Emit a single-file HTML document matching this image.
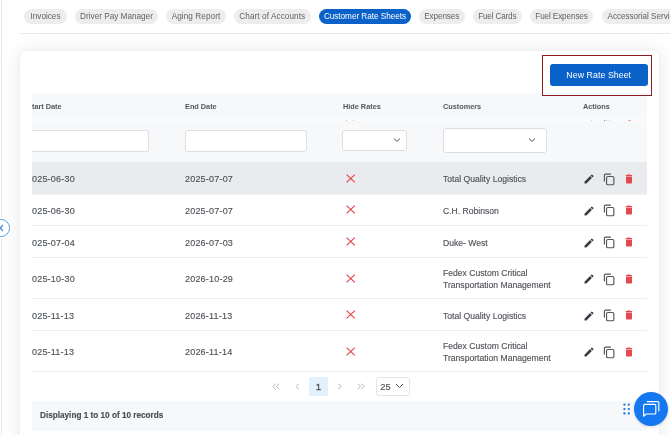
<!DOCTYPE html>
<html><head><meta charset="utf-8">
<style>
*{box-sizing:border-box;margin:0;padding:0}
html,body{width:670px;height:435px;overflow:hidden;background:#fff;font-family:"Liberation Sans",sans-serif;}
.a{position:absolute}
#root{will-change:transform;position:relative;width:670px;height:435px;overflow:hidden;background:#fff}
.pill{position:absolute;top:8.5px;height:15px;border-radius:8px;background:#ededed;color:#626262;font-size:8.2px;line-height:15px;text-align:center;white-space:nowrap}
.pill.act{background:#0a62c9;color:#fff}
.card{position:absolute;left:19.5px;top:51px;width:639.5px;height:420px;background:#fff;border-radius:6px;box-shadow:0 0 4px rgba(0,0,0,0.04),0 0 18px 3px rgba(0,0,0,0.065)}
.th{position:absolute;top:101.3px;font-size:7.35px;letter-spacing:-0.02px;font-weight:bold;color:#53585e;line-height:12px;white-space:nowrap}
.inp{position:absolute;background:#fff;border:1px solid #dcdee1;border-radius:3px}
.row{position:absolute;left:32px;width:615px;border-bottom:1px solid #eceef0}
.td{-webkit-text-stroke:0.15px currentColor;position:absolute;font-size:8.6px;color:#50555a;line-height:12px;white-space:nowrap}
.dt{letter-spacing:0.2px;font-size:9px}
.ic{position:absolute}
</style></head><body>
<div id="root">
  <!-- sidebar border -->
  <div class="a" style="left:1px;top:0;width:1px;height:435px;background:#e6e6e6"></div>

  <!-- tabs -->
  <div class="pill" style="left:24px;width:43px;letter-spacing:0px">Invoices</div>
  <div class="pill" style="left:75px;width:83px;letter-spacing:0px">Driver Pay Manager</div>
  <div class="pill" style="left:166px;width:60px;letter-spacing:0.08px">Aging Report</div>
  <div class="pill" style="left:234px;width:76.5px;letter-spacing:0.08px">Chart of Accounts</div>
  <div class="pill act" style="left:319px;width:92px;letter-spacing:-0.03px">Customer Rate Sheets</div>
  <div class="pill" style="left:418.5px;width:46.5px;letter-spacing:-0.1px">Expenses</div>
  <div class="pill" style="left:472.5px;width:49.5px;letter-spacing:-0.18px">Fuel Cards</div>
  <div class="pill" style="left:530px;width:63px;letter-spacing:-0.13px">Fuel Expenses</div>
  <div class="pill" style="left:601.5px;width:90px;text-align:left;padding-left:6px;letter-spacing:-0.05px">Accessorial Services</div>
  <!-- separator -->
  <div class="a" style="left:20px;top:33px;width:650px;height:1px;background:#e8e8e8"></div>

  <!-- card -->
  <div class="card"></div>


  <!-- header bg -->
  <div class="a" style="left:32px;top:93px;width:615px;height:69px;background:#f7f8f9"></div>
  <div class="a" style="left:32px;top:119px;width:615px;height:1.5px;background:#fcfcfd"></div>
  <div class="th" style="left:32px">tart Date</div>
  <div class="th" style="left:185px">End Date</div>
  <div class="th" style="left:343px">Hide Rates</div>
  <div class="th" style="left:443px">Customers</div>
  <div class="th" style="left:583px">Actions</div>

  <!-- ghost strip -->
  <div class="a" style="left:346px;top:120px;width:1px;height:1px;background:#f2a9ab"></div>
  <div class="a" style="left:353px;top:120px;width:1px;height:1px;background:#f2a9ab"></div>
  <div class="a" style="left:591px;top:120px;width:1px;height:1px;background:#d2d4d6"></div>
  <div class="a" style="left:604px;top:120px;width:1px;height:1px;background:#8a8e92"></div>
  <div class="a" style="left:605px;top:120px;width:6px;height:1px;background:#e6e7e9"></div>
  <div class="a" style="left:628px;top:120px;width:3px;height:1px;background:#f4a4a7"></div>
  <!-- highlight box + button -->
  <div class="a" style="left:542px;top:55px;width:110px;height:41px;border:1.7px solid #8c1e22"></div>
  <div class="a" style="left:550px;top:63.5px;width:97.5px;height:22px;background:#0a62c9;border-radius:3px;color:#fff;font-size:8.8px;letter-spacing:0.05px;line-height:22px;padding-top:0.6px;text-align:center">New Rate Sheet</div>

  <!-- filters -->
  <div class="inp" style="left:32px;top:129.5px;width:117px;height:22px;border-left:none;border-radius:0 3px 3px 0"></div>
  <div class="inp" style="left:185px;top:129.5px;width:122px;height:22px"></div>
  <div class="inp" style="left:342px;top:130px;width:65px;height:21px"></div>
  <div class="inp" style="left:443px;top:128px;width:104px;height:25px"></div>
  <svg class="ic" style="left:393px;top:137px" width="8" height="6" viewBox="0 0 8 6"><path d="M1 1.6 L4 4.4 L7 1.6" fill="none" stroke="#50555a" stroke-width="1"/></svg>
  <svg class="ic" style="left:528px;top:137px" width="8" height="6" viewBox="0 0 8 6"><path d="M1 1.6 L4 4.4 L7 1.6" fill="none" stroke="#50555a" stroke-width="1"/></svg>

  <!-- rows -->
  <div id="rows">
<div class="a" style="left:32px;top:194px;width:615px;height:1px;background:#f2f3f5"></div>
<div class="row" style="top:162px;height:32px;background:#e9ebee;border-bottom:none;"></div>
<div class="td dt" style="left:32px;top:173.2px">025-06-30</div>
<div class="td dt" style="left:185px;top:173.2px">2025-07-07</div>
<svg class="ic" style="left:345.5px;top:173.5px" width="9.5" height="9" viewBox="0 0 9.5 9"><path d="M0.6 0.6 L8.9 8.4 M8.9 0.6 L0.6 8.4" stroke="#e5484d" stroke-width="1.25" fill="none"/></svg>
<div class="td" style="left:443px;top:173.2px">Total Quality Logistics</div>
<svg class="ic" style="left:582.8px;top:173.1px" width="12" height="12" viewBox="0 0 24 24"><path fill="#363c43" d="M3 17.25V21h3.75L17.81 9.94l-3.75-3.75L3 17.25zM20.71 7.04a.996.996 0 0 0 0-1.41l-2.34-2.34a.996.996 0 0 0-1.41 0l-1.83 1.83 3.75 3.75 1.83-1.83z"/></svg>
<svg class="ic" style="left:603px;top:172.5px" width="13" height="13" viewBox="0 0 13 13"><path d="M1.4 8.4 V2.3 Q1.4 1.1 2.6 1.1 H7.9" fill="none" stroke="#52575c" stroke-width="1.15"/><rect x="3.55" y="3.45" width="7.3" height="8.25" rx="1.3" fill="none" stroke="#52575c" stroke-width="1.15"/></svg>
<svg class="ic" style="left:623.4px;top:172.7px" width="12" height="12" viewBox="0 0 24 24"><path fill="#e5484d" d="M6 19c0 1.1.9 2 2 2h8c1.1 0 2-.9 2-2V7H6v12zM18.4 4h-3.5l-1-1h-5l-1 1H5.6v2h12.8V4z"/></svg>
<div class="row" style="top:193px;height:33px;"></div>
<div class="td dt" style="left:32px;top:204.7px">025-06-30</div>
<div class="td dt" style="left:185px;top:204.7px">2025-07-07</div>
<svg class="ic" style="left:345.5px;top:205.0px" width="9.5" height="9" viewBox="0 0 9.5 9"><path d="M0.6 0.6 L8.9 8.4 M8.9 0.6 L0.6 8.4" stroke="#e5484d" stroke-width="1.25" fill="none"/></svg>
<div class="td" style="left:443px;top:204.7px">C.H. Robinson</div>
<svg class="ic" style="left:582.8px;top:204.6px" width="12" height="12" viewBox="0 0 24 24"><path fill="#363c43" d="M3 17.25V21h3.75L17.81 9.94l-3.75-3.75L3 17.25zM20.71 7.04a.996.996 0 0 0 0-1.41l-2.34-2.34a.996.996 0 0 0-1.41 0l-1.83 1.83 3.75 3.75 1.83-1.83z"/></svg>
<svg class="ic" style="left:603px;top:204.0px" width="13" height="13" viewBox="0 0 13 13"><path d="M1.4 8.4 V2.3 Q1.4 1.1 2.6 1.1 H7.9" fill="none" stroke="#52575c" stroke-width="1.15"/><rect x="3.55" y="3.45" width="7.3" height="8.25" rx="1.3" fill="none" stroke="#52575c" stroke-width="1.15"/></svg>
<svg class="ic" style="left:623.4px;top:204.2px" width="12" height="12" viewBox="0 0 24 24"><path fill="#e5484d" d="M6 19c0 1.1.9 2 2 2h8c1.1 0 2-.9 2-2V7H6v12zM18.4 4h-3.5l-1-1h-5l-1 1H5.6v2h12.8V4z"/></svg>
<div class="row" style="top:225px;height:33px;"></div>
<div class="td dt" style="left:32px;top:236.7px">025-07-04</div>
<div class="td dt" style="left:185px;top:236.7px">2026-07-03</div>
<svg class="ic" style="left:345.5px;top:237.0px" width="9.5" height="9" viewBox="0 0 9.5 9"><path d="M0.6 0.6 L8.9 8.4 M8.9 0.6 L0.6 8.4" stroke="#e5484d" stroke-width="1.25" fill="none"/></svg>
<div class="td" style="left:443px;top:236.7px">Duke- West</div>
<svg class="ic" style="left:582.8px;top:236.6px" width="12" height="12" viewBox="0 0 24 24"><path fill="#363c43" d="M3 17.25V21h3.75L17.81 9.94l-3.75-3.75L3 17.25zM20.71 7.04a.996.996 0 0 0 0-1.41l-2.34-2.34a.996.996 0 0 0-1.41 0l-1.83 1.83 3.75 3.75 1.83-1.83z"/></svg>
<svg class="ic" style="left:603px;top:236.0px" width="13" height="13" viewBox="0 0 13 13"><path d="M1.4 8.4 V2.3 Q1.4 1.1 2.6 1.1 H7.9" fill="none" stroke="#52575c" stroke-width="1.15"/><rect x="3.55" y="3.45" width="7.3" height="8.25" rx="1.3" fill="none" stroke="#52575c" stroke-width="1.15"/></svg>
<svg class="ic" style="left:623.4px;top:236.2px" width="12" height="12" viewBox="0 0 24 24"><path fill="#e5484d" d="M6 19c0 1.1.9 2 2 2h8c1.1 0 2-.9 2-2V7H6v12zM18.4 4h-3.5l-1-1h-5l-1 1H5.6v2h12.8V4z"/></svg>
<div class="row" style="top:257px;height:42px;"></div>
<div class="td dt" style="left:32px;top:273.2px">025-10-30</div>
<div class="td dt" style="left:185px;top:273.2px">2026-10-29</div>
<svg class="ic" style="left:345.5px;top:273.5px" width="9.5" height="9" viewBox="0 0 9.5 9"><path d="M0.6 0.6 L8.9 8.4 M8.9 0.6 L0.6 8.4" stroke="#e5484d" stroke-width="1.25" fill="none"/></svg>
<div class="td" style="left:443px;top:266.6px;line-height:12px">Fedex Custom Critical<br>Transportation Management</div>
<svg class="ic" style="left:582.8px;top:273.1px" width="12" height="12" viewBox="0 0 24 24"><path fill="#363c43" d="M3 17.25V21h3.75L17.81 9.94l-3.75-3.75L3 17.25zM20.71 7.04a.996.996 0 0 0 0-1.41l-2.34-2.34a.996.996 0 0 0-1.41 0l-1.83 1.83 3.75 3.75 1.83-1.83z"/></svg>
<svg class="ic" style="left:603px;top:272.5px" width="13" height="13" viewBox="0 0 13 13"><path d="M1.4 8.4 V2.3 Q1.4 1.1 2.6 1.1 H7.9" fill="none" stroke="#52575c" stroke-width="1.15"/><rect x="3.55" y="3.45" width="7.3" height="8.25" rx="1.3" fill="none" stroke="#52575c" stroke-width="1.15"/></svg>
<svg class="ic" style="left:623.4px;top:272.7px" width="12" height="12" viewBox="0 0 24 24"><path fill="#e5484d" d="M6 19c0 1.1.9 2 2 2h8c1.1 0 2-.9 2-2V7H6v12zM18.4 4h-3.5l-1-1h-5l-1 1H5.6v2h12.8V4z"/></svg>
<div class="row" style="top:298px;height:33px;"></div>
<div class="td dt" style="left:32px;top:309.7px">025-11-13</div>
<div class="td dt" style="left:185px;top:309.7px">2026-11-13</div>
<svg class="ic" style="left:345.5px;top:310.0px" width="9.5" height="9" viewBox="0 0 9.5 9"><path d="M0.6 0.6 L8.9 8.4 M8.9 0.6 L0.6 8.4" stroke="#e5484d" stroke-width="1.25" fill="none"/></svg>
<div class="td" style="left:443px;top:309.7px">Total Quality Logistics</div>
<svg class="ic" style="left:582.8px;top:309.6px" width="12" height="12" viewBox="0 0 24 24"><path fill="#363c43" d="M3 17.25V21h3.75L17.81 9.94l-3.75-3.75L3 17.25zM20.71 7.04a.996.996 0 0 0 0-1.41l-2.34-2.34a.996.996 0 0 0-1.41 0l-1.83 1.83 3.75 3.75 1.83-1.83z"/></svg>
<svg class="ic" style="left:603px;top:309.0px" width="13" height="13" viewBox="0 0 13 13"><path d="M1.4 8.4 V2.3 Q1.4 1.1 2.6 1.1 H7.9" fill="none" stroke="#52575c" stroke-width="1.15"/><rect x="3.55" y="3.45" width="7.3" height="8.25" rx="1.3" fill="none" stroke="#52575c" stroke-width="1.15"/></svg>
<svg class="ic" style="left:623.4px;top:309.2px" width="12" height="12" viewBox="0 0 24 24"><path fill="#e5484d" d="M6 19c0 1.1.9 2 2 2h8c1.1 0 2-.9 2-2V7H6v12zM18.4 4h-3.5l-1-1h-5l-1 1H5.6v2h12.8V4z"/></svg>
<div class="row" style="top:330px;height:42px;"></div>
<div class="td dt" style="left:32px;top:346.2px">025-11-13</div>
<div class="td dt" style="left:185px;top:346.2px">2026-11-14</div>
<svg class="ic" style="left:345.5px;top:346.5px" width="9.5" height="9" viewBox="0 0 9.5 9"><path d="M0.6 0.6 L8.9 8.4 M8.9 0.6 L0.6 8.4" stroke="#e5484d" stroke-width="1.25" fill="none"/></svg>
<div class="td" style="left:443px;top:339.6px;line-height:12px">Fedex Custom Critical<br>Transportation Management</div>
<svg class="ic" style="left:582.8px;top:346.1px" width="12" height="12" viewBox="0 0 24 24"><path fill="#363c43" d="M3 17.25V21h3.75L17.81 9.94l-3.75-3.75L3 17.25zM20.71 7.04a.996.996 0 0 0 0-1.41l-2.34-2.34a.996.996 0 0 0-1.41 0l-1.83 1.83 3.75 3.75 1.83-1.83z"/></svg>
<svg class="ic" style="left:603px;top:345.5px" width="13" height="13" viewBox="0 0 13 13"><path d="M1.4 8.4 V2.3 Q1.4 1.1 2.6 1.1 H7.9" fill="none" stroke="#52575c" stroke-width="1.15"/><rect x="3.55" y="3.45" width="7.3" height="8.25" rx="1.3" fill="none" stroke="#52575c" stroke-width="1.15"/></svg>
<svg class="ic" style="left:623.4px;top:345.7px" width="12" height="12" viewBox="0 0 24 24"><path fill="#e5484d" d="M6 19c0 1.1.9 2 2 2h8c1.1 0 2-.9 2-2V7H6v12zM18.4 4h-3.5l-1-1h-5l-1 1H5.6v2h12.8V4z"/></svg>
</div><!--/rows-->

  <!-- pagination -->
  <div class="a" style="left:309px;top:377px;width:19px;height:19px;background:#e3f1fc;border-radius:2px"></div>
  <div class="td" style="left:314px;top:380.5px;color:#50555a;width:9px;text-align:center;font-size:8.8px;-webkit-text-stroke:0.4px #50555a">1</div>
  <svg class="ic" style="left:271px;top:382px" width="10" height="9" viewBox="0 0 10 9"><path d="M4.5 1.7 L2 4.5 L4.5 7.3 M8 1.7 L5.5 4.5 L8 7.3" fill="none" stroke="#a9adb1" stroke-width="0.9"/></svg>
  <svg class="ic" style="left:294px;top:382px" width="6" height="9" viewBox="0 0 6 9"><path d="M4.8 1.7 L2.2 4.5 L4.8 7.3" fill="none" stroke="#a9adb1" stroke-width="0.9"/></svg>
  <svg class="ic" style="left:337px;top:382px" width="6" height="9" viewBox="0 0 6 9"><path d="M1.5 1.7 L4.1 4.5 L1.5 7.3" fill="none" stroke="#a9adb1" stroke-width="0.9"/></svg>
  <svg class="ic" style="left:356px;top:382px" width="10" height="9" viewBox="0 0 10 9"><path d="M2 1.7 L4.5 4.5 L2 7.3 M5.5 1.7 L8 4.5 L5.5 7.3" fill="none" stroke="#a9adb1" stroke-width="0.9"/></svg>
  <div class="inp" style="left:376px;top:377px;width:34px;height:19px;border-color:#e3e5e8"></div>
  <div class="td" style="left:380.3px;top:381.4px;color:#50555a;font-size:9.3px">25</div>
  <svg class="ic" style="left:395px;top:383px" width="9" height="6" viewBox="0 0 9 6"><path d="M1 1 L4.5 4.5 L8 1" fill="none" stroke="#555" stroke-width="1"/></svg>

  <!-- footer -->
  <div class="a" style="left:32px;top:401px;width:614px;height:30px;background:#f7f8f9"></div>
  <div class="td" style="left:40px;top:410.3px;font-weight:bold;font-size:8.2px;color:#4a4f55">Displaying 1 to 10 of 10 records</div>

  <!-- dots -->
  <svg class="ic" style="left:622px;top:403px" width="9" height="13" viewBox="0 0 9 13">
    <g fill="#1a73e8"><circle cx="2.4" cy="1.6" r="1.15"/><circle cx="6.8" cy="1.6" r="1.15"/><circle cx="2.4" cy="6.1" r="1.15"/><circle cx="6.8" cy="6.1" r="1.15"/><circle cx="2.4" cy="10.5" r="1.15"/><circle cx="6.8" cy="10.5" r="1.15"/></g>
  </svg>
  <!-- chat -->
  <div class="a" style="left:634px;top:392px;width:34px;height:34px;border-radius:50%;background:#1479f0;box-shadow:0 1px 3px rgba(0,0,0,0.15)"></div>
  <svg class="ic" style="left:638px;top:396px" width="26" height="26" viewBox="0 0 26 26">
    <path d="M9.3 5.6 H19.8 Q20.8 5.6 20.8 6.6 V14.8" fill="none" stroke="#fff" stroke-width="1.15" stroke-linecap="round"/>
    <path d="M6.6 8.3 H16.8 Q17.8 8.3 17.8 9.3 V17 Q17.8 18 16.8 18 H8.2 L5.6 20.2 V9.3 Q5.6 8.3 6.6 8.3 Z" fill="none" stroke="#fff" stroke-width="1.15" stroke-linejoin="round"/>
  </svg>

  <!-- collapse -->
  <div class="a" style="left:-8px;top:219px;width:17.5px;height:17.5px;border-radius:50%;border:1.3px solid #5b9cee;background:#fff"></div>
  <svg class="ic" style="left:0;top:223.5px" width="4" height="8" viewBox="0 0 4 8"><path d="M2.8 1 L0.2 4 L2.8 7" fill="none" stroke="#4a8fe6" stroke-width="1.4"/></svg>
</div>
</body></html>
